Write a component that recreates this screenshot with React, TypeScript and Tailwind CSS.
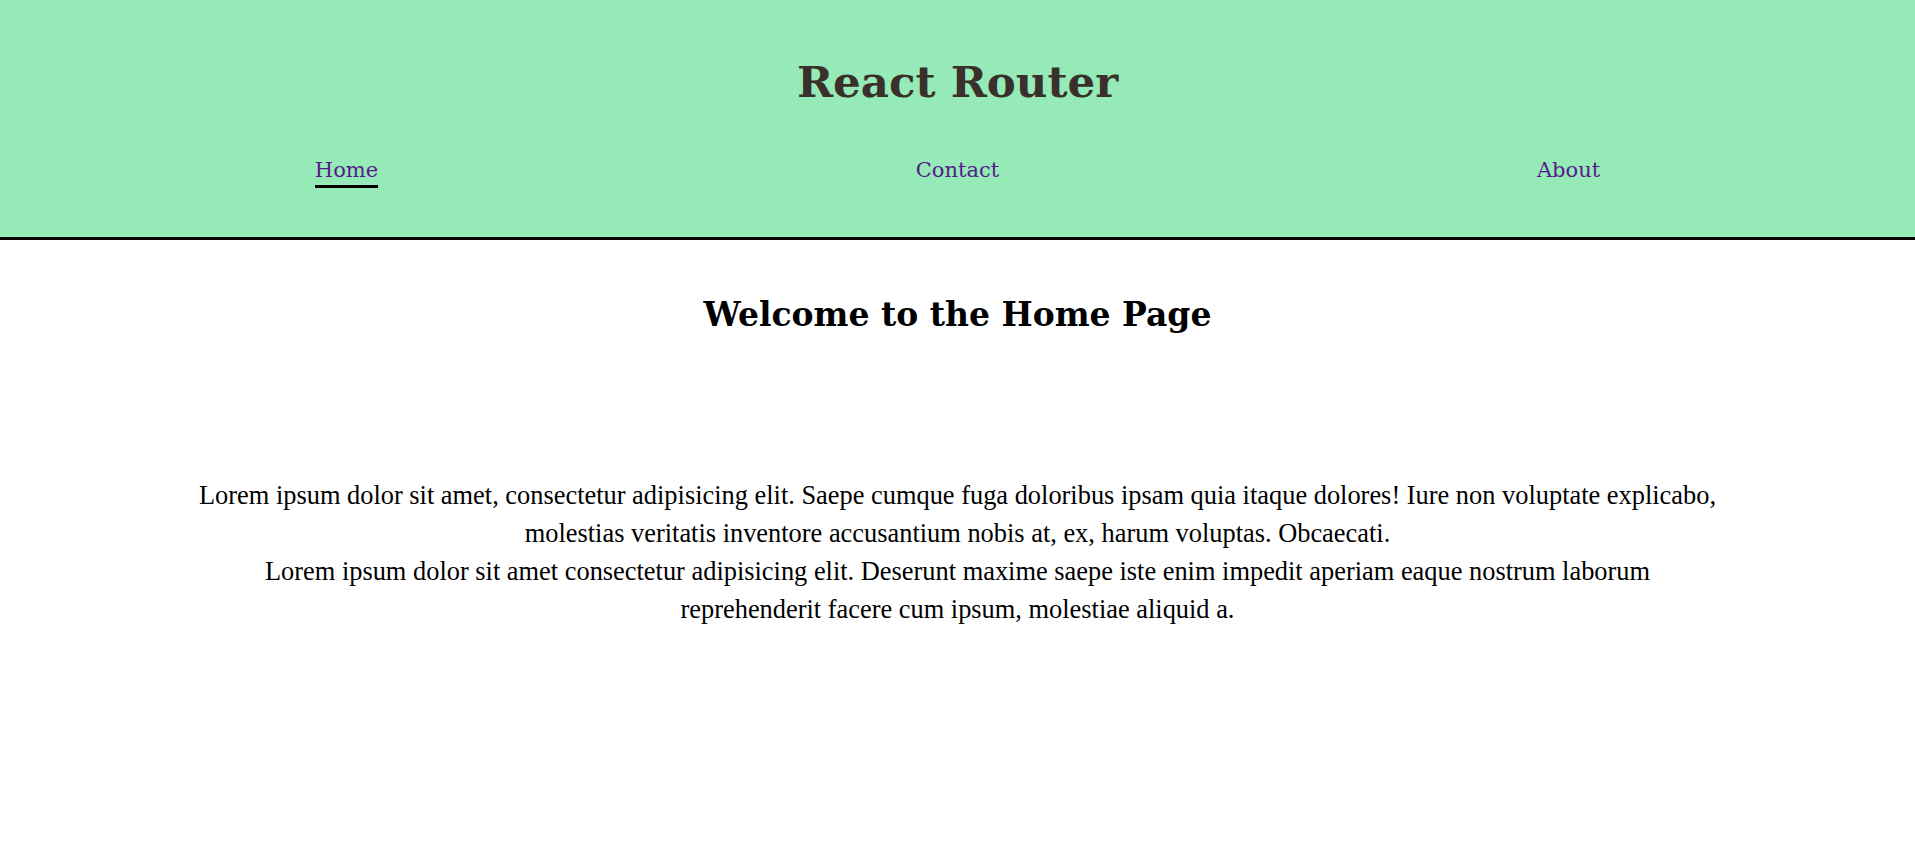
import React from 'react';

// Simple router-demo page: green header with title + nav, centered home content.

const links = [
  { label: 'Home', active: true },
  { label: 'Contact', active: false },
  { label: 'About', active: false },
];

export default function App() {
  return (
    <div className="min-h-screen bg-white font-['DejaVu_Serif',Georgia,serif]">
      <header className="h-[240px] bg-[#95eab7] border-b-[3px] border-black flex flex-col items-center">
        <h1 className="mt-[55px] text-[43.5px] leading-[54px] font-bold text-[#3a302b]">React Router</h1>
        <nav className="mt-[46px] w-[1833px] grid grid-cols-3 justify-items-center">
          {links.map(l => (
            <a
              key={l.label}
              href="#"
              className={
                'text-[21px] leading-[30px] text-[#551a8b] ' +
                (l.active ? 'border-b-[3px] border-black' : 'border-b-[3px] border-transparent')
              }
            >
              {l.label}
            </a>
          ))}
        </nav>
      </header>

      <main className="flex flex-col items-center">
        <h2 className="mt-[53px] text-[33px] leading-[44px] font-bold text-black">
          Welcome to the Home Page
        </h2>
        <div className="mt-[139px] w-[1524px] text-center font-['Liberation_Serif',Georgia,serif] text-[26.4px] leading-[38px] text-black">
          <p>
            Lorem ipsum dolor sit amet, consectetur adipisicing elit. Saepe cumque fuga doloribus ipsam quia itaque
            dolores! Iure non voluptate explicabo, molestias veritatis inventore accusantium nobis at, ex, harum
            voluptas. Obcaecati.
          </p>
          <p>
            Lorem ipsum dolor sit amet consectetur adipisicing elit. Deserunt maxime saepe iste enim impedit aperiam
            eaque nostrum laborum reprehenderit facere cum ipsum, molestiae aliquid a.
          </p>
        </div>
      </main>
    </div>
  );
}
